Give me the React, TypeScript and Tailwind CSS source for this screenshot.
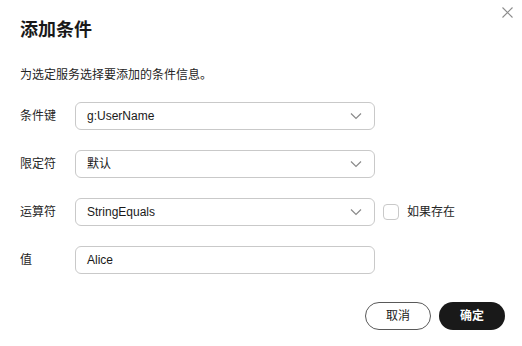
import React from 'react';

const font = { fontFamily: '"Liberation Sans", "Noto Sans CJK SC", sans-serif' };

function Chevron() {
  return (
    <svg width="12" height="8" viewBox="0 0 12 8" fill="none" className="shrink-0">
      <path d="M1 1.5L6 6.5L11 1.5" stroke="#8a8a8a" strokeWidth="1.2" />
    </svg>
  );
}

function SelectBox({ value }: { value: string }) {
  return (
    <div className="w-[300px] h-[28px] border border-[#c9c9c9] rounded-[6px] flex items-center justify-between pl-[11px] pr-[12px] text-[12px] text-[#191919]">
      <span>{value}</span>
      <Chevron />
    </div>
  );
}

function Row({ label, children }: { label: string; children: React.ReactNode }) {
  return (
    <div className="flex items-center">
      <div className="w-[55px] text-[12px] text-[#252525]">{label}</div>
      {children}
    </div>
  );
}

export default function App() {
  return (
    <div className="w-[522px] h-[346px] bg-white relative" style={font}>
      {/* Close */}
      <button className="absolute top-[6px] right-[9px] w-[12px] h-[12px] flex items-center justify-center">
        <svg width="11" height="11" viewBox="0 0 11 11" fill="none">
          <path d="M0.5 0.5L10.5 10.5M10.5 0.5L0.5 10.5" stroke="#8c8c8c" strokeWidth="1.1" />
        </svg>
      </button>

      <div className="pl-5 pr-[17px] pt-[18px]">
        <h1 className="text-[18px] leading-6 font-bold text-[#191919]">添加条件</h1>
        <p className="mt-6 text-[12px] leading-[18px] text-[#252525]">为选定服务选择要添加的条件信息。</p>

        <div className="mt-[18px] flex flex-col gap-5">
          <Row label="条件键">
            <SelectBox value="g:UserName" />
          </Row>
          <Row label="限定符">
            <SelectBox value="默认" />
          </Row>
          <Row label="运算符">
            <SelectBox value="StringEquals" />
            <label className="flex items-center ml-2 text-[12px] text-[#252525]">
              <span className="w-4 h-4 border border-[#c9c9c9] rounded-[4px] bg-white" />
              <span className="ml-2">如果存在</span>
            </label>
          </Row>
          <Row label="值">
            <div className="w-[300px] h-[28px] border border-[#c9c9c9] rounded-[6px] flex items-center pl-[11px] text-[12px] text-[#191919]">
              Alice
            </div>
          </Row>
        </div>

        {/* Footer */}
        <div className="mt-7 flex justify-end gap-2">
          <button className="w-[66px] h-[28px] rounded-full border border-[#595959] text-[12px] text-[#191919] bg-white">
            取消
          </button>
          <button className="w-[66px] h-[28px] rounded-full bg-[#191919] text-[12px] text-white font-bold">
            确定
          </button>
        </div>
      </div>
    </div>
  );
}
